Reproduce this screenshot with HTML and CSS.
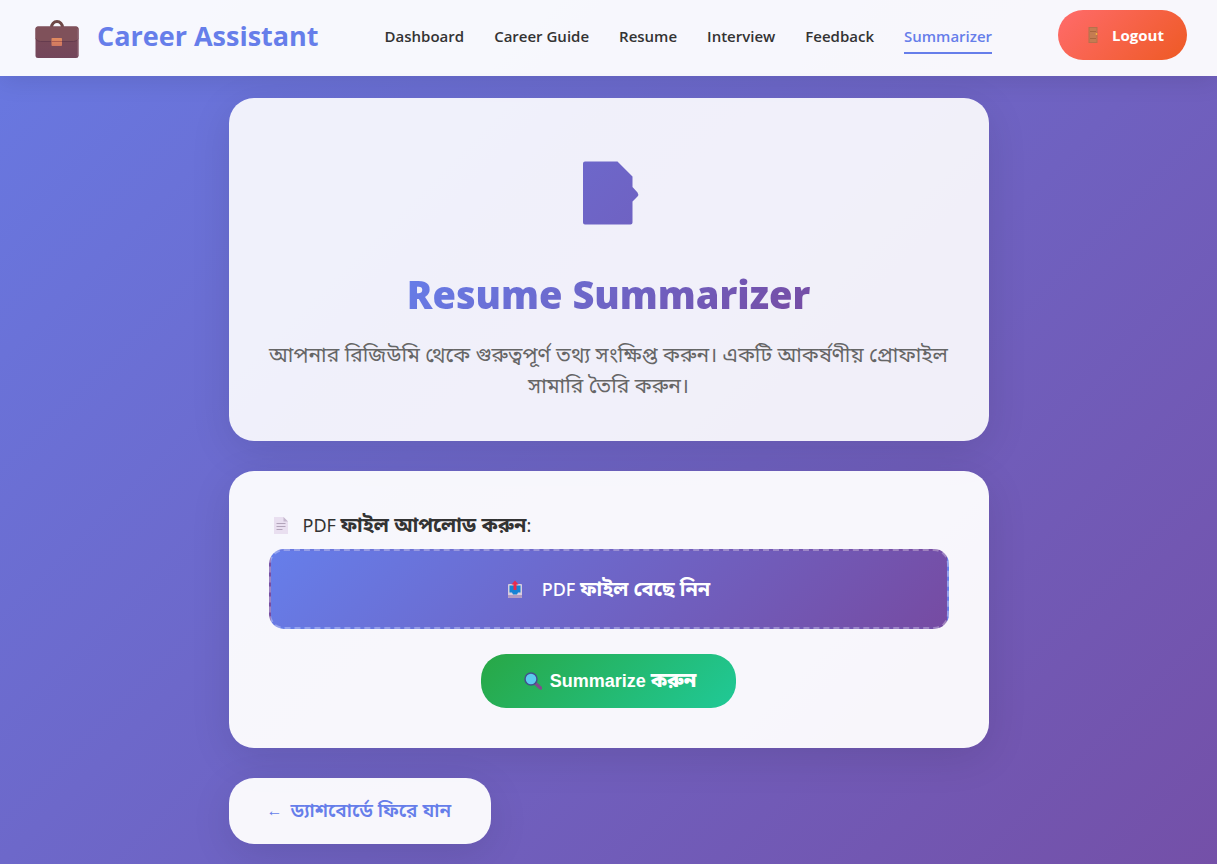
FILE: index.html
```html
<!DOCTYPE html>
<html lang="bn">
<head>
<meta charset="utf-8">
<meta name="viewport" content="width=device-width, initial-scale=1">
<title>Resume Summarizer - Career Assistant</title>
<link rel="stylesheet" href="styles.css">
</head>
<body>
<header class="header">
  <div class="brand">
    <svg class="brand-icon" viewBox="0 0 44 40" aria-hidden="true">
      <defs>
        <linearGradient id="case" x1="0" y1="0" x2="0" y2="1"><stop offset="0" stop-color="#7b4b57"/><stop offset="1" stop-color="#73465b"/></linearGradient>
        <linearGradient id="clasp" x1="0" y1="0" x2="0" y2="1"><stop offset="0" stop-color="#e18c60"/><stop offset="1" stop-color="#cf7660"/></linearGradient>
      </defs>
      <path d="M16.500 8.500a5.500 6 0 0 1 11 0" fill="none" stroke="#6d4847" stroke-width="3"/>
      <rect x="0.500" y="7.500" width="43" height="31.500" rx="2.500" fill="url(#case)"/>
      <path d="M.5 19.500V10A2.500 2.500 0 0 1 3 7.500h38A2.500 2.500 0 0 1 43.500 10v9.500q-1 3-5 3h-33q-4 0-5-3z" fill="#7f515a"/>
      <path d="M.8 19.800q1.200 2.700 4.700 2.700h33q3.500 0 4.700-2.700" fill="none" stroke="#653b4e" stroke-width="1"/>
      <path d="M43 10v27" stroke="#936a78" stroke-width="1"/>
      <rect x="16.500" y="19" width="10.500" height="8" rx=".8" fill="url(#clasp)"/>
      <path d="M16.500 22.500h10.500" stroke="#ad5b50" stroke-width="1"/>
    </svg>
    <span class="brand-name">Career Assistant</span>
  </div>
  <nav class="nav">
    <a class="nav-link" href="#">Dashboard</a>
    <a class="nav-link" href="#">Career Guide</a>
    <a class="nav-link" href="#">Resume</a>
    <a class="nav-link" href="#">Interview</a>
    <a class="nav-link" href="#">Feedback</a>
    <a class="nav-link nav-link-active" href="#" aria-current="page">Summarizer</a>
  </nav>
  <button class="logout" type="button">
    <svg class="logout-icon" viewBox="0 0 16 16" aria-hidden="true">
      <rect x="3.500" y="0" width="9" height="16" fill="#b5714c"/>
      <rect x="4.500" y="1" width="7" height="14" fill="#c47c52"/>
      <path d="M5 4.500h6M5 11.500h6" stroke="#a9663f"/>
      <circle cx="11.500" cy="7" r=".9" fill="#f7b63c"/>
    </svg>
    <span>Logout</span>
  </button>
</header>
<main class="page">
  <section class="card hero">
    <svg class="hero-icon" viewBox="0 0 56 64" aria-hidden="true">
      <defs><linearGradient id="doc" gradientUnits="userSpaceOnUse" x1="-250" y1="-250" x2="310" y2="310"><stop offset="0" stop-color="#667eea"/><stop offset="1" stop-color="#764ba2"/></linearGradient></defs>
      <path d="M2 0.500H34.500L49.500 15.500V26L54.500 31.500Q56 33.500 54.500 35.500L49.500 40.500V61.500Q49.500 63.500 47.500 63.500H2Q0 63.500 0 61.500V2.500Q0 .5 2 .5Z" fill="url(#doc)"/>
    </svg>
    <h1 class="hero-title">Resume Summarizer</h1>
    <p class="hero-text">আপনার রিজিউমি থেকে গুরুত্বপূর্ণ তথ্য সংক্ষিপ্ত করুন। একটি আকর্ষণীয় প্রোফাইল সামারি তৈরি করুন।</p>
  </section>
  <form class="card form">
    <label class="form-label" for="pdf">
      <svg class="label-icon" viewBox="0 0 14 17" aria-hidden="true">
        <path d="M0 0h9.500L14 4.500V17H0z" fill="#e9dff0"/>
        <path d="M9.500 0L14 4.500H9.500z" fill="#c5b8ce"/>
        <path d="M2.500 6.500h9M2.500 9.500h9M2.500 12.500h6" stroke="#b2a4ba"/>
      </svg>
      <span>PDF <b class="bengali">ফাইল আপলোড করুন</b>:</span>
    </label>
    <label class="upload">
      <input class="upload-input" id="pdf" type="file" accept="application/pdf">
      <svg class="upload-icon" viewBox="0 0 16 18" aria-hidden="true">
        <rect x="1" y="4" width="14" height="14" rx="1" fill="#d9cede"/>
        <path d="M1 15h14v2a1 1 0 0 1-1 1H2a1 1 0 0 1-1-1z" fill="#b29bc2"/>
        <path d="M2.500 5.500h11v7h-2.500l-1 2H6l-1-2H2.500z" fill="#1683d5"/>
        <path d="M6.500 10V4.500H4.500L8 .5l3.500 4H9.500V10z" fill="#e92b4c"/>
      </svg>
      <span>PDF <b class="bengali">ফাইল বেছে নিন</b></span>
    </label>
    <button class="submit" type="submit">
      <svg class="submit-icon" viewBox="0 0 18 18" aria-hidden="true">
        <path d="M11.500 11.500l5 4.500" stroke="#824b8c" stroke-width="3.500" stroke-linecap="round"/>
        <circle cx="7" cy="7" r="6" fill="#5bcbee" stroke="#43518d" stroke-width="1.500"/>
      </svg>
      <span>Summarize <b class="bengali">করুন</b></span>
    </button>
  </form>
  <a class="card back" href="#"><span class="arrow">←</span><span>ড্যাশবোর্ডে ফিরে যান</span></a>
</main>
</body>
</html>
```
FILE: styles.css
```css
* {
  box-sizing: border-box;
}

body {
  margin: 0;
  min-height: 100vh;
  font-family: "Noto Sans", "Open Sans", "Noto Sans Bengali", sans-serif;
  color: #333;
  background: linear-gradient(135deg, #6879e2 0%, #7450a8 100%);
}

.header {
  display: flex;
  align-items: center;
  justify-content: space-between;
  height: 76px;
  padding: 0 30px 6px 35px;
  background: rgba(255, 255, 255, 0.95);
  box-shadow: 0 4px 24px rgba(0, 0, 0, 0.1);
}

.brand {
  display: flex;
  align-items: center;
  gap: 18px;
  padding-top: 8px;
  color: #667eea;
}

.brand-icon {
  width: 44px;
  height: 40px;
}

.brand-name {
  padding-bottom: 6px;
  font: 700 27px/38px "Open Sans", "Noto Sans", sans-serif;
}

.nav {
  display: flex;
  gap: 30px;
}

.nav-link {
  padding: 8px 0 5px;
  border-bottom: 2px solid transparent;
  color: #333;
  font: 600 15px/22px "Open Sans", "Noto Sans", sans-serif;
  text-decoration: none;
}

.nav-link-active {
  border-color: #667eea;
  color: #667eea;
}

.logout {
  display: flex;
  align-items: center;
  gap: 11px;
  height: 50px;
  padding: 0 23px 0 27px;
  border: 0;
  border-radius: 25px;
  color: #fff;
  font: 700 15px/22px "Open Sans", "Noto Sans", sans-serif;
  background: linear-gradient(135deg, #ff6b6b, #ee5a24);
}

.logout-icon {
  width: 16px;
  height: 16px;
}

.page {
  display: flex;
  flex-direction: column;
  gap: 30px;
  max-width: 800px;
  margin: 0 auto;
  padding: 22px 20px 20px;
}

.card {
  border-radius: 25px;
  background: rgba(255, 255, 255, 0.95);
  box-shadow: 0 10px 40px rgba(0, 0, 0, 0.1);
}

.hero {
  display: flex;
  flex-direction: column;
  align-items: center;
  padding: 63px 40px 40px;
  background: rgba(255, 255, 255, 0.9);
  text-align: center;
}

.hero-icon {
  width: 60px;
  height: 64px;
  padding-left: 4px;
}

.hero-title {
  margin: 41px 0 17px;
  font: 800 38px/56px "Open Sans", "Noto Sans", sans-serif;
  color: transparent;
  background: linear-gradient(135deg, #667eea, #764ba2);
  background-clip: text;
}

.hero-text {
  margin: 0;
  color: #666;
  font-size: 21px;
  line-height: 31px;
}

.form {
  display: flex;
  flex-direction: column;
  padding: 40px;
}

.form-label {
  display: flex;
  align-items: center;
  gap: 15px;
  padding-left: 5px;
  font-size: 18px;
  line-height: 28px;
}

.bengali {
  font-size: 20px;
  line-height: 24px;
}

.label-icon {
  width: 14px;
  height: 17px;
}

.upload {
  display: flex;
  align-items: center;
  justify-content: center;
  gap: 19px;
  height: 80px;
  margin: 10px 0 25px;
  border: 2px dashed rgba(255, 255, 255, 0.3);
  border-radius: 15px;
  color: #fff;
  font-size: 18px;
  font-weight: 500;
  background: linear-gradient(135deg, #667eea 0%, #764ba2 100%);
  cursor: pointer;
}

.upload-input {
  position: absolute;
  width: 1px;
  height: 1px;
  opacity: 0;
}

.upload-icon {
  width: 16px;
  height: 18px;
}

.submit {
  display: flex;
  align-items: center;
  align-self: center;
  gap: 8px;
  height: 54px;
  padding: 0 40px 0 43px;
  border: 0;
  border-radius: 25px;
  color: #fff;
  font: 700 18px/28px "Liberation Sans", "Noto Sans Bengali", sans-serif;
  background: linear-gradient(135deg, #28a745, #20c997);
}

.submit-icon {
  width: 18px;
  height: 18px;
}

.back {
  display: flex;
  align-items: center;
  align-self: flex-start;
  gap: 8px;
  height: 66px;
  padding: 0 40px 0 38px;
  color: #667eea;
  font-size: 19px;
  font-weight: 600;
  text-decoration: none;
}

.arrow {
  font: 400 16px/24px "Liberation Sans", sans-serif;
}
```
